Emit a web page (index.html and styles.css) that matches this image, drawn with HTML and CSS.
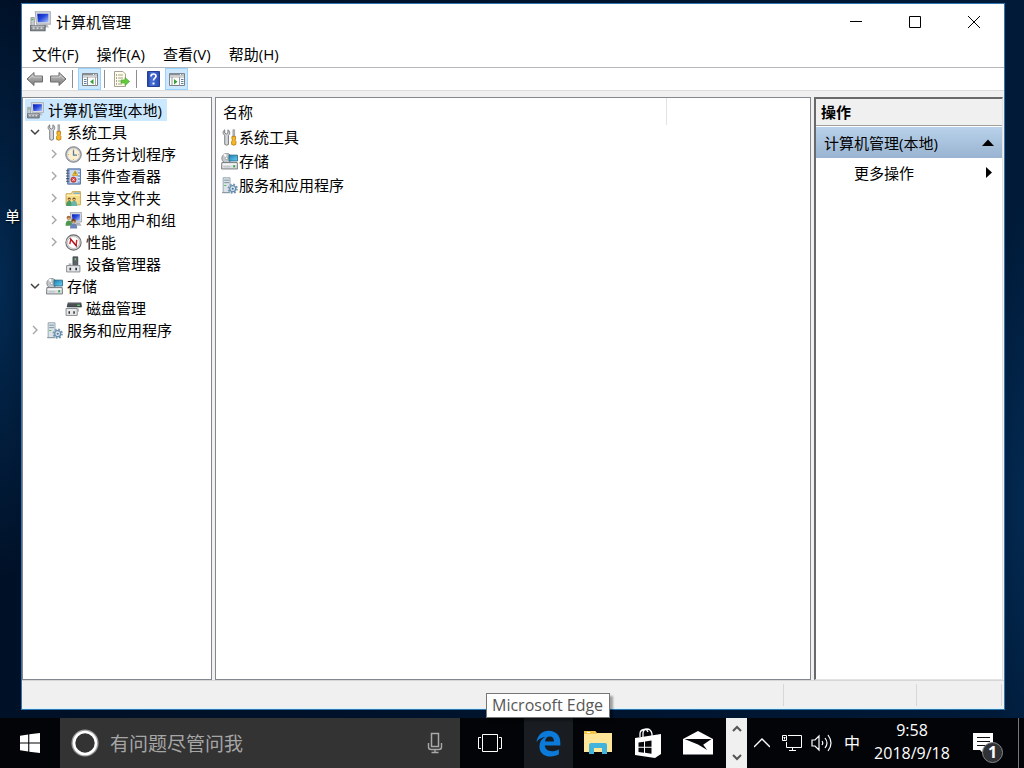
FILE: index.html
```html
<!DOCTYPE html>
<html lang="zh-CN">
<head>
<meta charset="utf-8">
<meta name="viewport" content="width=device-width, initial-scale=1">
<title>计算机管理</title>
<link rel="stylesheet" href="styles.css">
</head>
<body>
<svg class="sprite" aria-hidden="true">
  <defs>
    <linearGradient id="screen" x1="0" y1="0" x2="1" y2="1"><stop offset="0" stop-color="#0b1fae"/><stop offset=".45" stop-color="#2445dc"/><stop offset="1" stop-color="#a9c0fa"/></linearGradient>
    <linearGradient id="metal" x1="0" y1="0" x2="0" y2="1"><stop offset="0" stop-color="#c4c4c4"/><stop offset="1" stop-color="#7d7d7d"/></linearGradient>
    <linearGradient id="help" x1="0" y1="0" x2="1" y2="0"><stop offset="0" stop-color="#1c3c9c"/><stop offset=".3" stop-color="#4a70d8"/><stop offset="1" stop-color="#2b4db8"/></linearGradient>
    <linearGradient id="teal" x1="0" y1="0" x2="1" y2="1"><stop offset="0" stop-color="#1b7fb4"/><stop offset="1" stop-color="#6ad0f2"/></linearGradient>
  </defs>
  <symbol id="i-computer" viewBox="0 0 16 16">
    <path d="M4 .5h11.500v9.500H5z" fill="#d9dce0" stroke="#a9aeb4" stroke-width=".8"/>
    <path d="M5.500 2h8.500v6.500H6z" fill="url(#screen)"/>
    <path d="M9 10h4l1.500 2.500H9z" fill="#b4b8bd"/>
    <path d="M.7 5h2.600v6H.7z" fill="#c9cdd1" stroke="#888" stroke-width=".6"/><path d="M1 6h1.500v1H1z" fill="#49b649"/>
    <path d="M.5 11h11v4H.5z" fill="#8d9297" stroke="#60656a" stroke-width=".8"/>
    <path d="M2 13h1.500M5 13h1.500M8 13h1.500" stroke="#eef1f3"/>
    <path d="M1 11.500h10" stroke="#d3d7da" stroke-width=".7"/>
  </symbol>
  <symbol id="i-tools" viewBox="0 0 16 16">
    <path d="M3.500.8v3l1.500 1 1.500-1v-3C8.600 1.800 8.800 4.500 7 6v8.500q-1.900 1.500-3.500 0V6C1.300 4.500 1.700 1.800 3.500.8z" fill="#d6d8da" stroke="#74787c" stroke-width=".9"/>
    <path d="M11.200.7h1.600v6h-1.600z" fill="#b8bcc0" stroke="#7a7e82" stroke-width=".5"/>
    <path d="M10.300 7h3.400v2.500l-.6 1 .9 1v3q-2 1.500-4 0v-3l.9-1-.6-1z" fill="#f5b82a" stroke="#bd7d0c" stroke-width=".8"/>
  </symbol>
  <symbol id="i-clock" viewBox="0 0 16 16">
    <circle cx="8" cy="8" r="7.300" fill="#b9bcc0" stroke="#777b80" stroke-width=".9"/>
    <circle cx="8" cy="8" r="5.500" fill="#fff0cd" stroke="#e7e9eb" stroke-width=".7"/>
    <path d="M8 4v4.500h3.300" fill="none" stroke="#5179a8" stroke-width="1.200"/>
    <path d="M8 2.800v1M8 12.200v1M2.800 8h1M12.200 8h1" stroke="#c69c45" stroke-width=".7"/>
  </symbol>
  <symbol id="i-event" viewBox="0 0 16 16">
    <path d="M2.500.8h12v14.400h-12z" fill="#8faddc" stroke="#526d9c" stroke-width=".9"/>
    <path d="M4.500 2h7.500v12H4.500z" fill="#cfdcef"/><path d="M12 3h2M12 6h2M12 9h2M12 12h2" stroke="#eaf2ff"/>
    <path d="M1 2.500h3M1 5h3M1 7.500h3M1 10h3M1 12.500h3" stroke="#45546d"/>
    <path d="M9.500 2.500l2.500 4.500H7z" fill="#ffd53a" stroke="#bc8b13" stroke-width=".6"/><path d="M9.500 4v2" stroke="#554000" stroke-width=".8"/>
    <circle cx="8" cy="11" r="2.500" fill="#d94040" stroke="#9e2525" stroke-width=".5"/><path d="M7 10l2 2M9 10l-2 2" stroke="#fff" stroke-width=".8"/>
  </symbol>
  <symbol id="i-share" viewBox="0 0 16 16">
    <path d="M1 3.500h5l1-2h7.500v12.500H1z" fill="#f6dc8b" stroke="#c9a650" stroke-width=".9"/><path d="M8 3h6" stroke="#6ea9d8" stroke-width="1.200"/><path d="M1.500 5h12.500" stroke="#fff2bb"/>
    <circle cx="4" cy="8.500" r="1.500" fill="#74521c"/><path d="M1 15q.3-4.800 3-4.800 2.600 0 2.800 4.800z" fill="#4b9c66"/>
    <circle cx="8.500" cy="8.500" r="1.500" fill="#74521c"/><path d="M5.800 15q.3-4.800 2.700-4.800 2.800 0 3 4.800z" fill="#68b5ac"/>
    <path d="M3.200 9h1.800M7.700 9h1.800" stroke="#edc292"/>
  </symbol>
  <symbol id="i-users" viewBox="0 0 16 16">
    <path d="M5 .5h10.500v9H6z" fill="#d4d8de" stroke="#a1a6ac" stroke-width=".8"/><path d="M6.500 2h7.500v6H7z" fill="url(#screen)"/>
    <path d="M10 10h4l1.500 3H10z" fill="#aeb3b8"/>
    <circle cx="3.500" cy="5.500" r="2" fill="#a66b34"/><path d="M.5 13q0-5 3-5t3.500 5z" fill="#4c9851"/><path d="M2.500 5.500h2v1.500h-2z" fill="#eab987"/>
    <circle cx="8" cy="8.500" r="2.100" fill="#75451f"/><path d="M4.700 15.500q0-5 3.300-5 3.500 0 3.500 5z" fill="#6f84b6"/><path d="M7 8.700h2v1.600H7z" fill="#efc08e"/>
  </symbol>
  <symbol id="i-perf" viewBox="0 0 16 16">
    <circle cx="8" cy="8" r="7.200" fill="#dedede" stroke="#6d6d6d" stroke-width="1"/><circle cx="8" cy="8" r="5.600" fill="#fff" stroke="#aaa" stroke-width=".6"/>
    <path d="M4.500 9.500l1-4.500 5 6 .5-5.500" fill="none" stroke="#d51f25" stroke-width="1.300"/><path d="M4.500 4l6.500 7.500" stroke="#9e1519"/>
  </symbol>
  <symbol id="i-device" viewBox="0 0 16 16">
    <path d="M7.500.8H12V9H7.500z" fill="#5d6368" stroke="#3e4347" stroke-width=".8"/><path d="M9.700 2v2" stroke="#78d778" stroke-width="1.200"/>
    <path d="M3.500 7H6v3H3.500z" fill="#aab0b5"/><path d="M1.500 9h12.500v6H1.500z" fill="#e3e5e7" stroke="#868b90" stroke-width=".9"/>
    <path d="M5 11v2.500M10.500 11v2.500" stroke="#2d3033" stroke-width="1.500"/>
  </symbol>
  <symbol id="i-storage" viewBox="0 0 16 16">
    <circle cx="5.300" cy="5" r="4.500" fill="#c2c7cb" stroke="#777d82" stroke-width=".8"/><path d="M5.300 5L2 1.800A4.500 4.500 0 0 1 5 .8z" fill="#f7f7f7"/><circle cx="5.300" cy="5" r="1.200" fill="#fff" stroke="#777" stroke-width=".5"/>
    <path d="M7.500 2h8v5.500h-8z" fill="url(#teal)" stroke="#286a87" stroke-width=".8"/>
    <path d="M.8 9h14.500l.2 6H.5z" fill="#dde0e2" stroke="#73787d" stroke-width=".9"/><path d="M1.500 10.500h13" stroke="#fff"/><path d="M11.500 11.500h1.800v2h-1.800z" fill="#36a442"/><path d="M2.500 13h6" stroke="#b9bdc1"/>
  </symbol>
  <symbol id="i-disk" viewBox="0 0 16 16">
    <path d="M3 2.500h12l.5 4H2z" fill="#4a5054" stroke="#34393c" stroke-width=".7"/><path d="M3 2.500h12" stroke="#aeb3b6"/><path d="M11.500 5h2.500" stroke="#64d572" stroke-width="1.200"/>
    <path d="M1 8h10.500v6.500H1z" fill="#e8eaec" stroke="#858a8f" stroke-width=".9"/><path d="M4 10.500V13M8.500 10.500V13" stroke="#2e3235" stroke-width="1.400"/><path d="M12.500 8v3" stroke="#aaa"/>
  </symbol>
  <symbol id="i-services" viewBox="0 0 16 16">
    <path d="M2 .7h6.500v14H2z" fill="#dce3e8" stroke="#8d9ea9" stroke-width=".8"/><path d="M3 3h4.500M3 5.300h4.500" stroke="#79909e" stroke-width=".9"/><path d="M3 8h2" stroke="#55b95b"/><path d="M1 14.700h7" stroke="#8898a2"/>
    <circle cx="11" cy="11" r="4" fill="none" stroke="#7697b3" stroke-width="1.700" stroke-dasharray="1.700 1.440"/><circle cx="11" cy="11" r="2.800" fill="#dceaf5" stroke="#668cab" stroke-width="1.200"/><circle cx="11" cy="11" r="1" fill="#4f7392"/>
  </symbol>
  <symbol id="i-open" viewBox="0 0 10 10"><path d="M1 3l4 4 4-4" fill="none" stroke="#404040" stroke-width="1.500"/></symbol>
  <symbol id="i-closed" viewBox="0 0 10 10"><path d="M3 1l4 4-4 4" fill="none" stroke="#a6a6a6" stroke-width="1.400"/></symbol>
  <symbol id="i-arrow" viewBox="0 0 18 16"><path d="M1 8l7-6.500V5h8.500v6H8v3.500z" fill="url(#metal)" stroke="#6c6c6c"/><path d="M3 8l4-3.700V6h8.500" fill="none" stroke="#ddd" stroke-width=".7"/></symbol>
  <symbol id="i-pane" viewBox="0 0 18 16"><path d="M1.500 2.500h15v12h-15z" fill="#fdfdfd" stroke="#7b8085"/><path d="M2 3.500h14" stroke="#8b9095" stroke-width="2"/><path d="M12 3.500h1M14.500 3.500h1" stroke="#fff"/><path d="M2 6h14" stroke="#aaa"/></symbol>
</svg>

<main class="desktop">
  <span class="desktop-label">单</span>
  <section class="window" aria-label="计算机管理">
    <header class="titlebar">
      <svg class="app-icon"><use href="#i-computer"/></svg>
      <h1 class="title">计算机管理</h1>
      <button class="caption" aria-label="最小化"><svg class="caption-icon" viewBox="0 0 12 12"><path d="M0 5.500h12"/></svg></button>
      <button class="caption" aria-label="最大化"><svg class="caption-icon" viewBox="0 0 12 12"><path d="M.5.5h11v11H.5z"/></svg></button>
      <button class="caption" aria-label="关闭"><svg class="caption-icon" viewBox="0 0 12 12"><path d="M0 0l12 12M12 0L0 12"/></svg></button>
    </header>
    <nav class="menubar">
      <button class="menu">文件(F)</button><button class="menu">操作(A)</button><button class="menu">查看(V)</button><button class="menu">帮助(H)</button>
    </nav>
    <div class="toolbar">
      <button class="tool" aria-label="后退"><svg class="tool-icon"><use href="#i-arrow"/></svg></button>
      <button class="tool" aria-label="前进"><svg class="tool-icon flip"><use href="#i-arrow"/></svg></button>
      <span class="divider"></span>
      <button class="tool active" aria-label="显示/隐藏控制台树"><svg class="tool-icon" viewBox="0 0 18 16"><use href="#i-pane"/><path d="M6.500 6v8.500" stroke="#8b9095"/><path d="M3 8.500h2.500M3 10.500h2.500M3 12.500h2.500" stroke="#5c80a8"/><path d="M12.500 8v5.500L9 10.700z" fill="#35a137"/><path d="M14.500 6v8.500" stroke="#aaa"/></svg></button>
      <span class="divider"></span>
      <button class="tool" aria-label="导出列表"><svg class="tool-icon" viewBox="0 0 18 16"><path d="M1.500.5H10L12.500 3v12.500h-11z" fill="#fffce9" stroke="#a5a397"/><path d="M3 4h1M3 7h1M3 10h1M3 13h1" stroke="#555"/><path d="M5 4h5M5 7h5M5 10h2.500M5 13h4" stroke="#a9a28c"/><path d="M8 9h4V6.500l4.500 4-4.500 4V12H8z" fill="#64cc3b" stroke="#4aa83a" stroke-width=".7"/></svg></button>
      <span class="divider"></span>
      <button class="tool" aria-label="帮助"><svg class="tool-icon" viewBox="0 0 18 16"><path d="M2.500.500h12v15h-12z" fill="url(#help)" stroke="#263f8f"/><path d="M6 5.500Q6 3 8.500 3T11 5.200c0 2-2.500 2-2.500 4.300" fill="none" stroke="#fff" stroke-width="1.700"/><path d="M7.500 11.500h2v2h-2z" fill="#fff"/></svg></button>
      <button class="tool active" aria-label="显示/隐藏操作窗格"><svg class="tool-icon" viewBox="0 0 18 16"><use href="#i-pane"/><path d="M4 6v8.500M11.500 6v8.500" stroke="#999"/><path d="M13 8.500h2.500M13 10.500h2.500M13 12.500h2.500" stroke="#5c80a8"/><path d="M6 8v5.500l3.500-2.800z" fill="#35a137"/></svg></button>
    </div>
    <div class="panes">
      <nav class="pane tree" aria-label="控制台树">
        <ul class="nodes">
          <li class="node root"><svg class="icon"><use href="#i-computer"/></svg><span>计算机管理(本地)</span></li>
          <li class="node"><button class="toggle" aria-label="折叠"><svg class="chevron"><use href="#i-open"/></svg></button><svg class="icon"><use href="#i-tools"/></svg><span>系统工具</span></li>
          <li class="node child"><button class="toggle" aria-label="展开"><svg class="chevron"><use href="#i-closed"/></svg></button><svg class="icon"><use href="#i-clock"/></svg><span>任务计划程序</span></li>
          <li class="node child"><button class="toggle" aria-label="展开"><svg class="chevron"><use href="#i-closed"/></svg></button><svg class="icon"><use href="#i-event"/></svg><span>事件查看器</span></li>
          <li class="node child"><button class="toggle" aria-label="展开"><svg class="chevron"><use href="#i-closed"/></svg></button><svg class="icon"><use href="#i-share"/></svg><span>共享文件夹</span></li>
          <li class="node child"><button class="toggle" aria-label="展开"><svg class="chevron"><use href="#i-closed"/></svg></button><svg class="icon"><use href="#i-users"/></svg><span>本地用户和组</span></li>
          <li class="node child"><button class="toggle" aria-label="展开"><svg class="chevron"><use href="#i-closed"/></svg></button><svg class="icon"><use href="#i-perf"/></svg><span>性能</span></li>
          <li class="node child"><span class="toggle"></span><svg class="icon"><use href="#i-device"/></svg><span>设备管理器</span></li>
          <li class="node"><button class="toggle" aria-label="折叠"><svg class="chevron"><use href="#i-open"/></svg></button><svg class="icon"><use href="#i-storage"/></svg><span>存储</span></li>
          <li class="node child"><span class="toggle"></span><svg class="icon"><use href="#i-disk"/></svg><span>磁盘管理</span></li>
          <li class="node"><button class="toggle" aria-label="展开"><svg class="chevron"><use href="#i-closed"/></svg></button><svg class="icon"><use href="#i-services"/></svg><span>服务和应用程序</span></li>
        </ul>
      </nav>
      <div class="pane list">
        <table class="items">
          <thead><tr><th class="head" scope="col">名称</th></tr></thead>
          <tbody>
            <tr><td class="cell"><div class="item"><svg class="icon"><use href="#i-tools"/></svg><span>系统工具</span></div></td></tr>
            <tr><td class="cell"><div class="item"><svg class="icon"><use href="#i-storage"/></svg><span>存储</span></div></td></tr>
            <tr><td class="cell"><div class="item"><svg class="icon"><use href="#i-services"/></svg><span>服务和应用程序</span></div></td></tr>
          </tbody>
        </table>
      </div>
      <aside class="actions">
        <h2 class="actions-title">操作</h2>
        <button class="group"><span>计算机管理(本地)</span><svg class="group-mark" viewBox="0 0 12 12"><path d="M6 2.500L12 9H0z"/></svg></button>
        <button class="action"><span>更多操作</span><svg class="action-mark" viewBox="0 0 12 12"><path d="M4 0l6 5.500L4 11z"/></svg></button>
      </aside>
    </div>
    <footer class="status"><span class="status-main"></span><span class="status-mid"></span><span class="status-end"></span></footer>
  </section>
</main>

<footer class="taskbar">
  <button class="start" aria-label="开始"><svg class="start-icon" viewBox="0 0 20 20"><path d="M0 2.800L8.200 1.500v8H0zM9.300 1.300L20 0v9.500H9.300zM0 10.500h8.200v8L0 17.300zM9.300 10.500H20V20L9.300 18.700z" fill="#fff"/></svg></button>
  <div class="search">
    <svg class="cortana" viewBox="0 0 28 28"><circle cx="14" cy="14" r="12.700" fill="none" stroke="#9b9b9b" stroke-width="1.800"/><circle cx="14" cy="14" r="11" fill="none" stroke="#fff" stroke-width="2.600"/></svg>
    <input class="search-box" type="text" aria-label="搜索" placeholder="有问题尽管问我">
    <button class="mic" aria-label="语音"><svg class="mic-icon" viewBox="0 0 16 22" fill="none" stroke="#a8a8a8"><path d="M4.500 1.500h7v13h-7z" stroke-width="1.500"/><path d="M1.500 11v4q0 2.500 2.500 2.500h8q2.500 0 2.500-2.500v-4M8 17.500v3M4.500 20.500h7" stroke-width="1.400"/></svg></button>
  </div>
  <button class="task view" aria-label="任务视图"><svg class="view-icon" viewBox="0 0 24 18" fill="none" stroke="#fff"><path d="M4.500.5h15v17h-15zM3 3.500H.5v11H3M21 3.500h2.500v11H21"/></svg></button>
  <div class="edge-slot">
    <button class="task edge" aria-label="Microsoft Edge"><svg class="edge-icon" viewBox="0 0 26 28"><path d="M.5 12.500C1.500 5.500 6.500.8 13.300.8c7.500 0 12 5.200 12 12.300v3.100H9.200c.3 4.100 3.400 5.900 7.300 5.900 2.800 0 5.200-.7 7.300-2.100v5.300c-2.600 1.500-5.400 2.200-8.700 2.200-7.200 0-11.500-4.200-11.500-10.500 0-4.500 2.300-7.900 6.200-9.900C5.800 7.800 2.800 9.300.5 12.500zM9.500 11.800h9.200c0-3.200-1.500-5-4.300-5s-4.600 1.900-4.900 5z" fill="#0b7ad9"/></svg></button>
    <span class="tooltip" role="tooltip">Microsoft Edge</span>
  </div>
  <button class="task" aria-label="文件资源管理器"><svg class="app" viewBox="0 0 28 28"><path d="M0 2h11l2 2h14v18H0z" fill="#eec65a"/><path d="M0 5h12l2-1h14v19H0z" fill="#ffe597"/><path d="M0 2h11l1.500 1.500L11 5H0z" fill="#f3c747"/><path d="M3 3h3v1H3z" fill="#fff"/><path d="M5 25V16q0-2 2-2h14q2 0 2 2v9h-5v-6h-8v6z" fill="#42b3da"/></svg></button>
  <button class="task" aria-label="应用商店"><svg class="store-icon" viewBox="0 0 28 30"><path d="M6 9V6q0-4 4-4.500 3-.3 4 2.500M9 9V5.500Q9 1 13 1t5 5v3" fill="none" stroke="#fff" stroke-width="1.300"/><path d="M1 10L27 6v20l-6 4-20-3z" fill="#fff"/><path d="M4.500 14.500l5.500-.8v5H4.500zM11 13.500l6.500-1v6.200H11zM4.500 19.700H10v5l-5.500-.8zM11 19.700h6.500v6l-6.500-1z" fill="#05070b"/></svg></button>
  <button class="task" aria-label="邮件"><svg class="mail-icon" viewBox="0 0 30 24"><path d="M0 8L15 0l15 8v15.500H0z" fill="#fff"/><path d="M1.500 8h27l-8.300 5.700 4 5.300L15 13.500z" fill="#05070b"/></svg></button>
  <div class="scroller">
    <button class="scroll" aria-label="向上"><svg class="scroll-icon" viewBox="0 0 10 8"><path d="M1 6l4-4 4 4"/></svg></button>
    <button class="scroll" aria-label="向下"><svg class="scroll-icon" viewBox="0 0 10 8"><path d="M1 2l4 4 4-4"/></svg></button>
  </div>
  <div class="tray">
    <button class="tray-button" aria-label="显示隐藏的图标"><svg class="tray-up" viewBox="0 0 16 10" fill="none" stroke="#fff" stroke-width="1.300"><path d="M0 9l8-8 8 8"/></svg></button>
    <button class="tray-button" aria-label="网络"><svg class="tray-icon" viewBox="0 0 20 18" fill="none" stroke="#fff"><path d="M6 1.500h13.500v12h-15V8M10.500 13.500v3M7 16.500h7M.5 1.500h4v5h-4zM1.500 3.500h2M2.500 3.500v2"/></svg></button>
    <button class="tray-button" aria-label="音量"><svg class="volume" viewBox="0 0 22 20" fill="none" stroke="#fff" stroke-width="1.200"><path d="M1 7h3l4-4v14l-4-4H1zM11 8q1.500 2 0 4M14 5q4 5 0 10M17 2q6 8 0 16"/></svg></button>
    <button class="tray-button ime">中</button>
    <button class="clock"><span>9:58</span><span>2018/9/18</span></button>
    <button class="notices" aria-label="通知"><svg class="notice-icon" viewBox="0 0 20 20"><path d="M0 0h20v17H10v3l-3-3H0z" fill="#fff"/><path d="M4 4.500h13M4 8.500h13M4 12.500h9" stroke="#111"/></svg><span class="badge">1</span></button>
    <button class="show-desktop" aria-label="显示桌面"></button>
  </div>
</footer>
</body>
</html>
```
FILE: styles.css
```css
* { box-sizing: border-box; }

body {
  margin: 0;
  height: 100vh;
  display: flex;
  flex-direction: column;
  overflow: hidden;
  background: linear-gradient(90deg, #001026, #00142e 60%, #001a38);
  color: #000;
  font: 15px/22px "Open Sans", "Noto Sans CJK SC", sans-serif;
}

button {
  border: 0;
  padding: 0;
  background: none;
  color: inherit;
  font: inherit;
}

svg { display: block; flex: none; }
.sprite { position: absolute; width: 0; height: 0; }

.desktop {
  position: relative;
  flex: 1;
  min-height: 0;
  display: flex;
  padding: 3px 19px 8px 21px;
  background:
    radial-gradient(ellipse 60px 300px at 0 40%, #032a52, transparent),
    radial-gradient(ellipse 40px 300px at 100% 70%, #032a52, transparent);
}

.desktop-label {
  position: absolute;
  left: 5px;
  top: 205px;
  color: #fff;
  text-shadow: 1px 1px 2px #000;
}

.window {
  position: relative;
  flex: 1;
  min-width: 0;
  display: flex;
  flex-direction: column;
  border: 1px solid #2f75b0;
  background: #f0f0f0;
}

.titlebar { display: flex; height: 37px; background: #fff; padding: 0 1px 2px 8px; align-items: center; }
.app-icon { width: 21px; height: 21px; }
.title { flex: 1; margin: 0 0 0 5px; font-size: 15px; font-weight: 400; }
.caption { width: 59px; height: 35px; display: grid; place-items: center; }
.caption-icon { width: 12px; height: 12px; fill: none; stroke: #000; }

.menubar { display: flex; gap: 18px; height: 27px; padding: 0 10px; background: #fff; border-bottom: 1px solid #b4b8bb; }

.toolbar { display: flex; align-items: center; height: 23px; padding-left: 1px; background: #fff; border-bottom: 1px solid #dcdcdc; }
.tool { width: 23px; height: 22px; display: grid; place-items: center; border: 1px solid transparent; }
.tool.active { background: #cce8ff; border-color: #99d1ff; }
.tool-icon { width: 18px; height: 16px; }
.flip { transform: scaleX(-1); }
.divider { width: 1px; height: 18px; margin: 0 5px 0 3px; background: #8d8d8d; }

.panes {
  flex: 1;
  min-height: 0;
  display: grid;
  grid-template-columns: 190px minmax(0, 1fr) 189px;
  gap: 3px;
  padding: 6px 1px 0 0;
}
.pane { min-width: 0; background: #fff; border: 1px solid #828790; overflow: hidden; }
.icon { width: 17px; height: 17px; }

.nodes { list-style: none; margin: 0; padding: 1px 2px; }
.node { display: flex; align-items: center; height: 22px; white-space: nowrap; }
.node .icon { margin-right: 4px; }
.root { width: max-content; padding: 0 5px 0 2px; background: #cce8ff; }
.child { padding-left: 19px; }
.toggle { width: 20px; height: 20px; display: grid; place-items: center; margin-right: 1px; }
.chevron { width: 10px; height: 10px; }

.items { border-collapse: collapse; width: 100%; max-width: 451px; }
.head { height: 27px; padding: 0 7px; text-align: left; font-weight: 400; border-right: 1px solid #e3e3e3; }
.cell { padding: 0 5px; }
.item { display: flex; align-items: center; gap: 1px; height: 24px; }

.actions { background: #fff; border: 1px solid #e3e3e3; border-top: 2px solid #696969; border-left: 2px solid #696969; }
.actions-title { margin: 0; padding: 2px 5px 1px; height: 27px; background: #f0f0f0; border-bottom: 1px solid #a0a0a0; font-size: 15px; }
.group { display: flex; width: 100%; height: 31px; margin-top: 1px; padding: 0 8px; align-items: center; justify-content: space-between; background: linear-gradient(#b9d1ea, #99b4d1); }
.group-mark, .action-mark { width: 12px; height: 12px; }
.action { display: flex; width: 100%; height: 30px; padding: 0 8px 0 38px; align-items: center; justify-content: space-between; }

.status { display: flex; height: 29px; padding: 3px 2px 2px 0; border-top: 1px solid #d7d7d7; border-bottom: 1px solid #d5f4ff; }
.status span { border-right: 1px solid #d7d7d7; }
.status-main { flex: 1; }
.status-mid { width: 133px; }
.status-end { width: 85px; }

.taskbar { display: flex; height: 50px; flex: none; background: #020407; color: #fff; }
.start { width: 60px; display: grid; place-items: center; }
.start-icon { width: 20px; height: 20px; }
.search { flex: 1; min-width: 0; display: flex; align-items: center; background: #333; padding: 0 16px 0 11px; }
.cortana { width: 28px; height: 28px; }
.search-box { flex: 1; min-width: 0; height: 40px; border: 0; padding: 0 0 2px 11px; background: none; color: #fff; font: 19px/26px "Noto Sans CJK SC", sans-serif; }
.search-box::placeholder { color: #a6a6a6; opacity: 1; }
.mic-icon { width: 18px; height: 22px; }
.task { width: 50px; height: 50px; display: grid; place-items: center; }
.view { width: 60px; margin-right: 4px; }
.view-icon { width: 24px; height: 18px; }
.edge-slot { position: relative; }
.edge { width: 49px; background: #191d22; }
.edge-icon { width: 25px; height: 27px; }
.app { width: 28px; height: 28px; }
.store-icon { width: 28px; height: 30px; }
.mail-icon { width: 30px; height: 24px; }

.tooltip {
  position: absolute;
  left: -38px;
  bottom: 50px;
  padding: 0 6px 0 5px;
  border: 1px solid #767676;
  background: #fff;
  color: #575757;
  box-shadow: 3px 3px 2px #0005;
  font-size: 16px;
  line-height: 23px;
  white-space: nowrap;
}

.scroller { display: flex; flex-direction: column; justify-content: space-between; width: 21px; margin-left: 3px; padding: 5px 0; background: #f0f0f0; }
.scroll { display: grid; place-items: center; height: 12px; }
.scroll-icon { width: 10px; height: 8px; fill: none; stroke: #555; stroke-width: 2; }

.tray { display: flex; align-items: center; }
.tray-button { width: 30px; height: 50px; display: grid; place-items: center; }
.tray-up { width: 16px; height: 10px; }
.tray-icon { width: 20px; height: 18px; }
.volume { width: 22px; height: 20px; }
.ime { font-size: 16px; }
.clock { width: 90px; display: flex; flex-direction: column; align-items: center; font-size: 16px; line-height: 23px; padding-bottom: 2px; }
.notices { position: relative; width: 61px; height: 50px; padding-right: 10px; display: grid; place-items: center; }
.notice-icon { width: 20px; height: 20px; }
.badge {
  position: absolute;
  left: 25px;
  top: 24px;
  width: 21px;
  height: 21px;
  border: 1px solid #888;
  border-radius: 50%;
  background: #303236;
  font-size: 16px;
  font-weight: 700;
  line-height: 18px;
}
.show-desktop { width: 6px; height: 50px; border-left: 1px solid #777; }
```
